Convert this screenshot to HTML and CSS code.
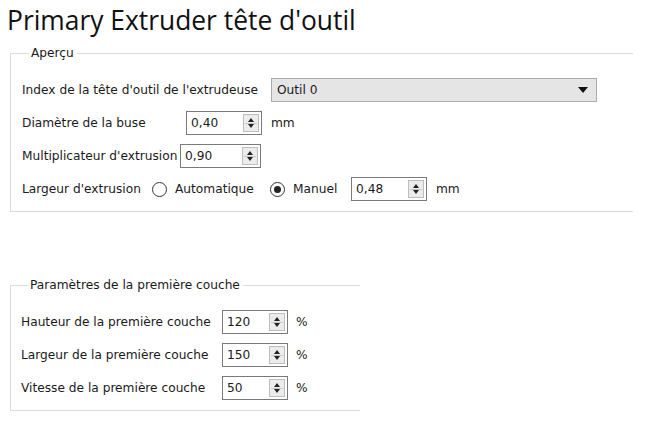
FILE: index.html
```html
<!DOCTYPE html>
<html lang="fr">
<head>
<meta charset="utf-8">
<link rel="stylesheet" href="styles.css">
</head>
<body>
<h1 class="title">Primary Extruder tête d'outil</h1>

<fieldset class="group group-main">
  <legend class="legend">Aperçu</legend>
  <div class="row">
    <span class="label w-index">Index de la tête d'outil de l'extrudeuse</span>
    <div class="combo"><span class="combo-text">Outil 0</span><span class="combo-arrow"></span></div>
  </div>
  <div class="row">
    <span class="label w-diam">Diamètre de la buse</span>
    <div class="spin w-76"><span class="spin-text">0,40</span><span class="spin-btn"><i class="up"></i><i class="down"></i></span></div>
    <span class="unit">mm</span>
  </div>
  <div class="row">
    <span class="label w-mult">Multiplicateur d'extrusion</span>
    <div class="spin w-81"><span class="spin-text">0,90</span><span class="spin-btn"><i class="up"></i><i class="down"></i></span></div>
  </div>
  <div class="row">
    <span class="label w-width">Largeur d'extrusion</span>
    <span class="radio"></span><span class="radio-label w-auto">Automatique</span>
    <span class="radio checked"></span><span class="radio-label w-manual">Manuel</span>
    <div class="spin w-76"><span class="spin-text">0,48</span><span class="spin-btn"><i class="up"></i><i class="down"></i></span></div>
    <span class="unit">mm</span>
  </div>
</fieldset>

<fieldset class="group group-layer">
  <legend class="legend">Paramètres de la première couche</legend>
  <div class="row">
    <span class="label w-layer">Hauteur de la première couche</span>
    <div class="spin w-66"><span class="spin-text">120</span><span class="spin-btn"><i class="up"></i><i class="down"></i></span></div>
    <span class="unit pct">%</span>
  </div>
  <div class="row">
    <span class="label w-layer">Largeur de la première couche</span>
    <div class="spin w-66"><span class="spin-text">150</span><span class="spin-btn"><i class="up"></i><i class="down"></i></span></div>
    <span class="unit pct">%</span>
  </div>
  <div class="row">
    <span class="label w-layer">Vitesse de la première couche</span>
    <div class="spin w-66"><span class="spin-text">50</span><span class="spin-btn"><i class="up"></i><i class="down"></i></span></div>
    <span class="unit pct">%</span>
  </div>
</fieldset>
</body>
</html>
```

FILE: styles.css
```css
html, body {
  margin: 0;
  padding: 0;
  background: #ffffff;
}
body {
  font-family: "DejaVu Sans", Verdana, sans-serif;
  font-size: 12.2px;
  color: #1a1a1a;
  width: 663px;
  height: 424px;
  overflow: hidden;
}
.title {
  font-family: "Open Sans", "Liberation Sans", sans-serif;
  font-weight: 400;
  font-size: 26.4px;
  line-height: 34px;
  margin: 3px 0 0 7px;
  color: #111;
  letter-spacing: 0;
}
.group {
  margin: 0;
  border: 1px solid #dcdcdc;
  border-right: none;
  padding: 17px 0 10px 11px;
  display: flex;
  flex-direction: column;
  gap: 9px;
  min-width: 0;
}
.group-main {
  margin: 8px 0 0 10px;
  width: 611px;
}
.group-layer {
  margin: 65px 0 0 10px;
  width: 339px;
  padding-left: 10px;
}
.legend {
  padding: 0 3px 0 2px;
  margin-left: 7px;
  font-size: 12.2px;
  line-height: 16px;
  color: #1a1a1a;
}
.row {
  display: flex;
  align-items: center;
  height: 24px;
}
.label {
  flex: none;
  white-space: nowrap;
}
.w-index { width: 249px; }
.w-diam { width: 164px; }
.w-mult { width: 158px; }
.w-width { width: 130px; }
.w-layer { width: 201px; }

.combo {
  width: 311px;
  height: 22px;
  border: 1px solid #acacac;
  background: #e5e5e5;
  display: flex;
  align-items: center;
  justify-content: space-between;
  padding: 0 8px 0 5px;
  box-sizing: content-box;
}
.combo-text { line-height: 22px; }
.combo-arrow {
  width: 0;
  height: 0;
  border-left: 5px solid transparent;
  border-right: 5px solid transparent;
  border-top: 6px solid #111;
}

.spin {
  flex: none;
  height: 24px;
  box-sizing: border-box;
  border: 1px solid #7a7a7a;
  background: #fff;
  display: flex;
  align-items: center;
  justify-content: space-between;
  padding: 0 2px 0 4px;
}
.w-76 { width: 76px; }
.w-81 { width: 81px; }
.w-66 { width: 66px; }
.spin-text { line-height: 20px; }
.spin-btn {
  width: 16px;
  height: 18px;
  border: 1px solid #bdbdbd;
  background: #ececec;
  display: flex;
  flex-direction: column;
  align-items: center;
  justify-content: center;
  gap: 2px;
  box-sizing: border-box;
  position: relative;
}
.spin-btn::after {
  content: "";
  position: absolute;
  left: 1px;
  right: 1px;
  top: 8px;
  border-top: 1px solid #c8c8c8;
}
.up, .down {
  display: block;
  width: 0;
  height: 0;
  border-left: 3px solid transparent;
  border-right: 3px solid transparent;
}
.up { border-bottom: 4px solid #222; }
.down { border-top: 4px solid #222; }

.unit { margin-left: 9px; }
.pct { margin-left: 8px; }

.radio {
  flex: none;
  width: 15px;
  height: 15px;
  box-sizing: border-box;
  border: 1px solid #333;
  border-radius: 50%;
  background: #fff;
  display: flex;
  align-items: center;
  justify-content: center;
}
.radio.checked::after {
  content: "";
  width: 7px;
  height: 7px;
  border-radius: 50%;
  background: #222;
}
.radio-label {
  flex: none;
  margin-left: 8px;
  white-space: nowrap;
}
.w-auto { width: 95px; }
.w-manual { width: 58px; }
```
